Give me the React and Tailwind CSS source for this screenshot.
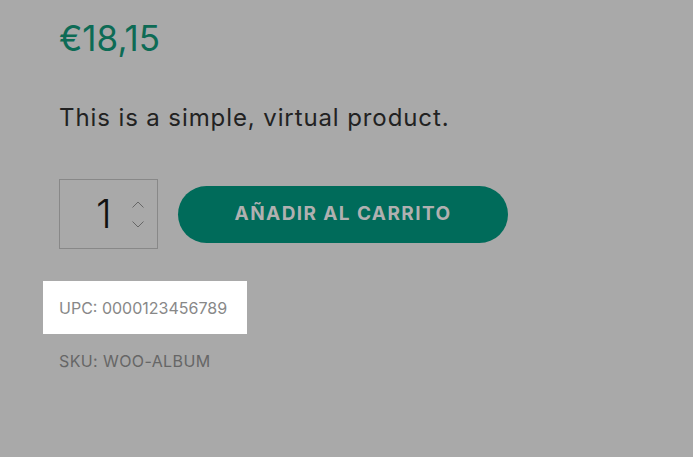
export default function App() {
    return (
        <div className="w-[693px] h-[457px] bg-[#a9a9a9] overflow-hidden" style={{ fontFamily: 'Inter, "DejaVu Sans", sans-serif' }}>
            <div className="pl-[59px] pt-[16px]">
                {/* Price */}
                <div className="text-[35px] leading-[44px] text-[#0d6b55]">€18,15</div>

                {/* Short description */}
                <p className="mt-[43px] text-[24px] leading-[30px] text-[#222] tracking-[0.9px]">This is a simple, virtual product.</p>

                {/* Add to cart */}
                <div className="mt-[46px] flex items-center gap-[20px]">
                    <div className="w-[99px] h-[70px] border border-[#888] flex items-center pl-[36px] gap-[20px]">
                        <span className="text-[40px] font-light text-[#111] leading-none">1</span>
                        <div className="flex flex-col gap-[13px] text-[#666]">
                            <svg width="12" height="7" viewBox="0 0 12 7" fill="none" stroke="currentColor" strokeWidth="1"><path d="M0.5 6.5 L6 1 L11.5 6.5" /></svg>
                            <svg width="12" height="7" viewBox="0 0 12 7" fill="none" stroke="currentColor" strokeWidth="1"><path d="M0.5 0.5 L6 6 L11.5 0.5" /></svg>
                        </div>
                    </div>
                    <button type="button" className="w-[330px] h-[57px] rounded-full bg-[#006b5a] text-[#b0b0b0] text-[19px] font-bold uppercase tracking-[1.4px]">
                        Añadir al carrito
                    </button>
                </div>

                {/* Meta */}
                <div className="mt-[32px] -ml-[16px] w-[204px] h-[53px] bg-white flex items-center pl-[16px] text-[16px] text-[#888]">
                    UPC: 0000123456789
                </div>
                <div className="mt-[15px] text-[16px] text-[#666] tracking-[0.4px]">SKU: WOO-ALBUM</div>
            </div>
        </div>
    );
}
